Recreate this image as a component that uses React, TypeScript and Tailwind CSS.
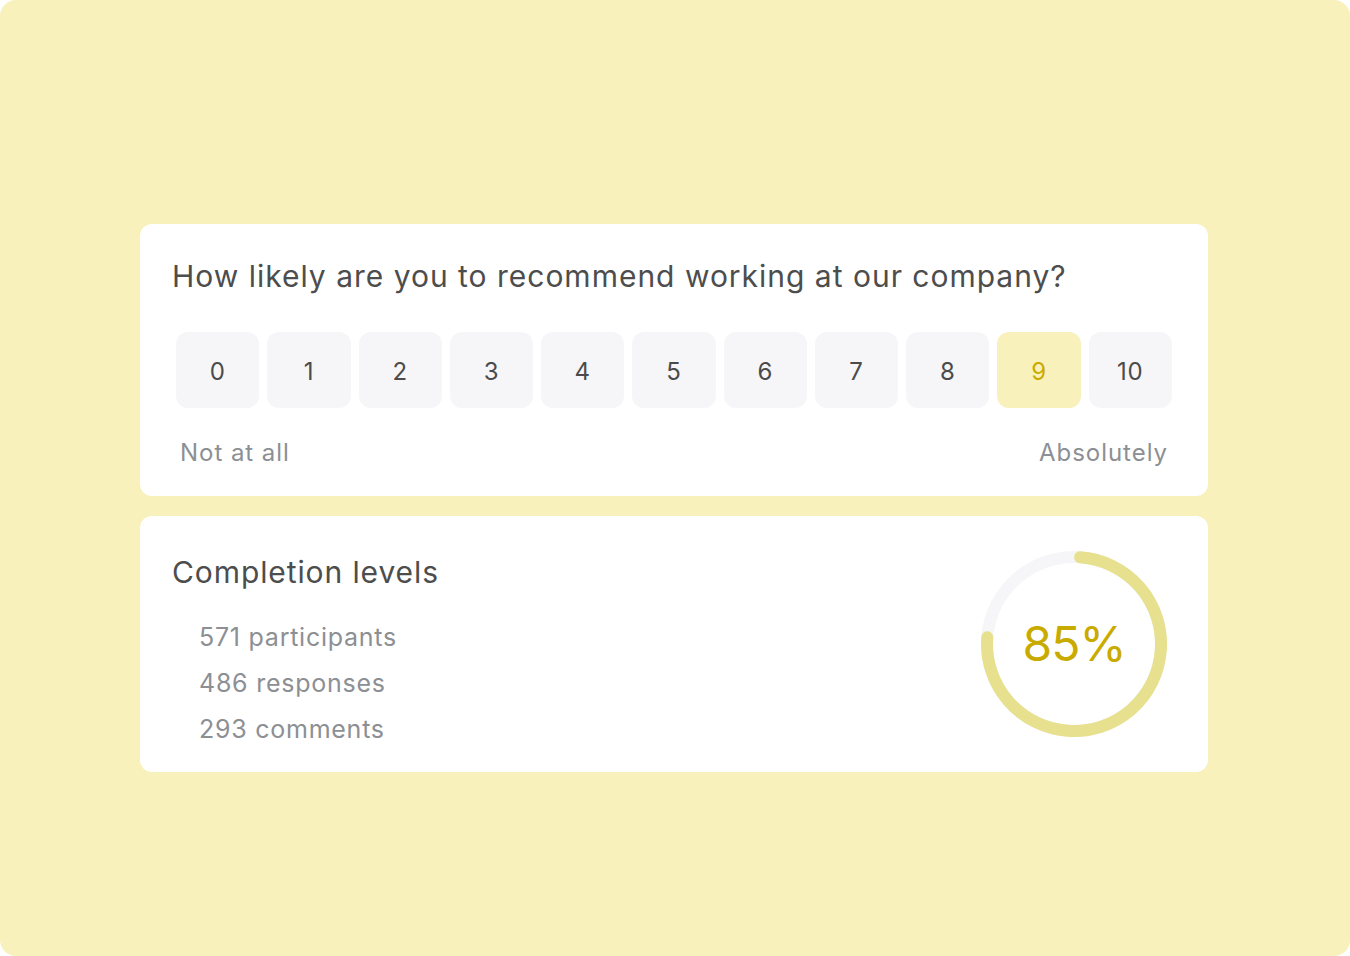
import React from 'react';

const SCORES = [0, 1, 2, 3, 4, 5, 6, 7, 8, 9, 10];
const SELECTED = 9;

const STATS = ['571 participants', '486 responses', '293 comments'];

function ScoreButton({ value, active }: { value: number; active: boolean }) {
  return (
    <div
      className={`flex h-[76px] flex-1 items-center justify-center rounded-xl pt-1 text-[24px] tracking-[0.03em] ${
        active ? 'bg-[#f8f1bc] text-[#c9ab00]' : 'bg-[#f6f6f8] text-[#4b4b4b]'
      }`}
    >
      {value}
    </div>
  );
}

function ProgressRing({ percent }: { percent: number }) {
  const r = 87;
  const c = 2 * Math.PI * r;
  // the drawn arc in the picture is a little shorter than the label says
  const dash = c * 0.75;
  return (
    <div className="relative h-[186px] w-[186px]">
      <svg width="186" height="186" viewBox="0 0 186 186" className="absolute inset-0">
        <circle cx="93" cy="93" r={r} fill="none" stroke="#f6f6f8" strokeWidth="12" />
        <circle
          cx="93"
          cy="93"
          r={r}
          fill="none"
          stroke="#e6e08f"
          strokeWidth="12"
          strokeLinecap="round"
          strokeDasharray={`${dash} ${c}`}
          transform="rotate(-86 93 93)"
        />
      </svg>
      <div className="absolute inset-0 flex items-center justify-center text-[48px] leading-none tracking-[-0.02em] text-[#c9ab00]">
        {percent}%
      </div>
    </div>
  );
}

export default function App() {
  return (
    <div
      className="h-[956px] w-[1350px] rounded-2xl bg-[#f8f1bc] pl-[140px] pr-[142px] pt-[224px]"
      style={{ fontFamily: 'Inter, "Noto Sans", sans-serif' }}
    >
      <div className="flex flex-col gap-5">
        <section className="rounded-xl bg-white px-8 pt-[34px] pb-[27px]">
          <h2 className="text-[30px] leading-[36px] tracking-[0.033em] text-[#4d4d4d]">
            How likely are you to recommend working at our company?
          </h2>
          <div className="mt-[38px] flex gap-2 px-1">
            {SCORES.map((s) => (
              <ScoreButton key={s} value={s} active={s === SELECTED} />
            ))}
          </div>
          <div className="mt-[29px] flex justify-between pl-2 pr-2 text-[24px] leading-8 tracking-[0.04em] text-[#8c8f93]">
            <span>Not at all</span>
            <span>Absolutely</span>
          </div>
        </section>

        <section className="flex items-center justify-between rounded-xl bg-white pl-8 pr-[41px]">
          <div className="pt-[38px] pb-5">
            <h2 className="text-[30px] leading-[36px] tracking-[0.03em] text-[#4d4d4d]">
              Completion levels
            </h2>
            <ul className="mt-6 pl-[27px] text-[25px] leading-[46px] tracking-[0.03em] text-[#8c8f93]">
              {STATS.map((s) => (
                <li key={s}>{s}</li>
              ))}
            </ul>
          </div>
          <ProgressRing percent={85} />
        </section>
      </div>
    </div>
  );
}
